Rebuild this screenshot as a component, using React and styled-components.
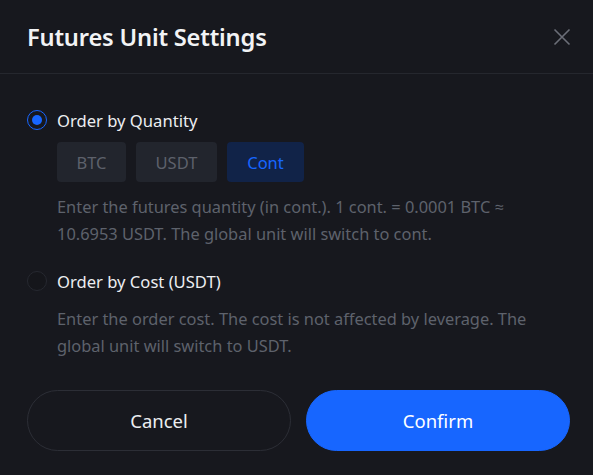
import React, { useState } from "react";
import styled, { createGlobalStyle } from "styled-components";

const GlobalStyle = createGlobalStyle`
	html, body {
		margin: 0;
		padding: 0;
		background: #17181e;
	}
	* {
		box-sizing: border-box;
	}
`;

const Dialog = styled.div`
	width: 593px;
	height: 475px;
	background: #17181e;
	font-family: "Noto Sans", "Open Sans", sans-serif;
	display: flex;
	flex-direction: column;
`;

const Header = styled.div`
	height: 74px;
	padding: 0 22px 0 27px;
	display: flex;
	align-items: center;
	justify-content: space-between;
	border-bottom: 1px solid #25272e;
`;

const Title = styled.h2`
	margin: 0;
	font-size: 23.7px;
	font-weight: 600;
	color: #f2f3f5;
	letter-spacing: -0.2px;
`;

const CloseButton = styled.button`
	width: 18px;
	height: 18px;
	padding: 0;
	border: none;
	background: none;
	color: #6b6e78;
	cursor: pointer;
	display: flex;
	svg {
		width: 18px;
		height: 18px;
	}
`;

const Body = styled.div`
	padding: 32px 27px 0 27px;
	display: flex;
	flex-direction: column;
`;

const Option = styled.label`
	display: flex;
	align-items: center;
	gap: 10px;
	height: 28px;
	cursor: pointer;
	margin-top: ${(p) => (p.$first ? "0" : "20px")};
`;

const Radio = styled.span`
	width: 20px;
	height: 20px;
	border-radius: 50%;
	flex: none;
	display: flex;
	align-items: center;
	justify-content: center;
	border: ${(p) => (p.$checked ? "1.5px solid #1766ff" : "1px solid #262830")};
	background: ${(p) => (p.$checked ? "transparent" : "#15161b")};
	&::after {
		content: "";
		width: 10px;
		height: 10px;
		border-radius: 50%;
		background: #1766ff;
		display: ${(p) => (p.$checked ? "block" : "none")};
	}
`;

const Label = styled.span`
	font-size: 16.6px;
	color: #eceef1;
`;

const Indent = styled.div`
	padding-left: 30px;
`;

const Units = styled.div`
	display: flex;
	gap: 10px;
	margin-top: 8px;
`;

const Unit = styled.button`
	width: ${(p) => p.$w}px;
	height: 40px;
	padding: 0;
	border: none;
	border-radius: 4px;
	font-family: inherit;
	font-size: 16.5px;
	cursor: pointer;
	background: ${(p) => (p.$active ? "#112348" : "#22252d")};
	color: ${(p) => (p.$active ? "#1766ff" : "#5d616b")};
`;

const Desc = styled.p`
	margin: ${(p) => (p.$tight ? "10px" : "11px")} 0 0 0;
	font-size: 16.4px;
	line-height: 27px;
	color: #5e626c;
	width: 508px;
`;

const Footer = styled.div`
	margin-top: auto;
	padding: 0 23px 24px 27px;
	display: grid;
	grid-template-columns: 1fr 1fr;
	gap: 15px;
`;

const Action = styled.button`
	height: 61px;
	border-radius: 31px;
	font-family: inherit;
	font-size: 18.5px;
	cursor: pointer;
	border: 1px solid ${(p) => (p.$primary ? "#1766ff" : "#2c2e36")};
	background: ${(p) => (p.$primary ? "#1766ff" : "transparent")};
	color: ${(p) => (p.$primary ? "#ffffff" : "#eceef1")};
`;

const units = [
	{ name: "BTC", w: 69 },
	{ name: "USDT", w: 81 },
	{ name: "Cont", w: 77 },
];

export default function App() {
	const [mode, setMode] = useState("qty");
	const [unit, setUnit] = useState("Cont");

	return (
		<Dialog>
			<GlobalStyle />
			<Header>
				<Title>Futures Unit Settings</Title>
				<CloseButton aria-label="Close">
					<svg viewBox="0 0 18 18" fill="none" stroke="currentColor" strokeWidth="1.6">
						<path d="M1.5 1.5L16.5 16.5M16.5 1.5L1.5 16.5" />
					</svg>
				</CloseButton>
			</Header>
			<Body>
				<Option $first onClick={() => setMode("qty")}>
					<Radio $checked={mode === "qty"} />
					<Label>Order by Quantity</Label>
				</Option>
				<Indent>
					<Units>
						{units.map((u) => (
							<Unit
								key={u.name}
								$w={u.w}
								$active={unit === u.name}
								onClick={() => setUnit(u.name)}
							>
								{u.name}
							</Unit>
						))}
					</Units>
					<Desc>
						Enter the futures quantity (in cont.). 1 cont. = 0.0001 BTC ≈
						10.6953 USDT. The global unit will switch to cont.
					</Desc>
				</Indent>
				<Option onClick={() => setMode("cost")}>
					<Radio $checked={mode === "cost"} />
					<Label>Order by Cost (USDT)</Label>
				</Option>
				<Indent>
					<Desc $tight>
						Enter the order cost. The cost is not affected by leverage. The
						global unit will switch to USDT.
					</Desc>
				</Indent>
			</Body>
			<Footer>
				<Action>Cancel</Action>
				<Action $primary>Confirm</Action>
			</Footer>
		</Dialog>
	);
}
